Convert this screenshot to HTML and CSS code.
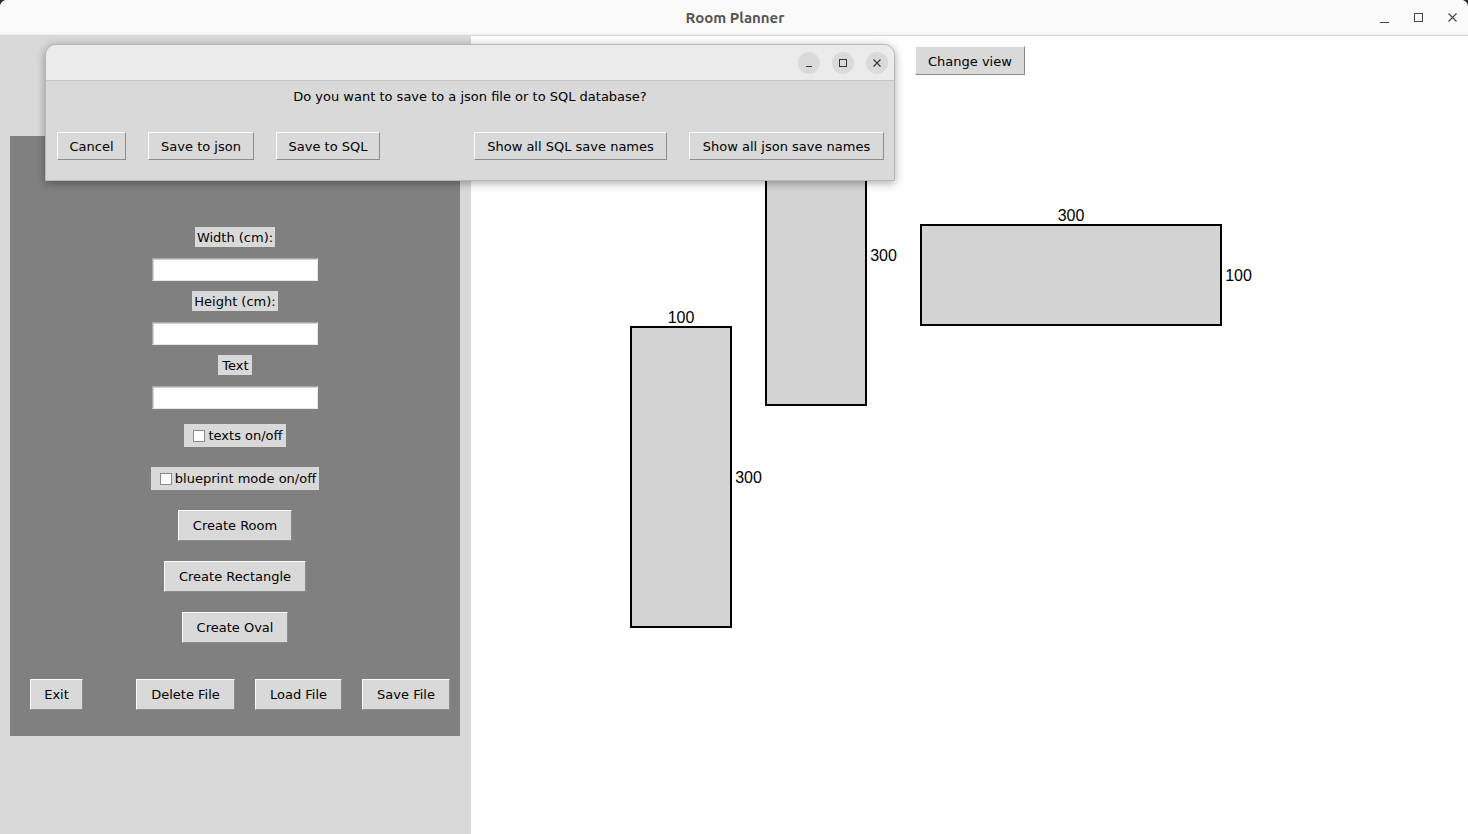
FILE: index.html
```html
<!DOCTYPE html>
<html lang="en">
<head>
<meta charset="utf-8">
<title>Room Planner</title>
<link rel="stylesheet" href="styles.css">
</head>
<body>
<div class="app">
  <header class="titlebar">
    <div class="title">Room Planner</div>
    <div class="wm-controls">
      <span class="wm-btn"><svg width="12" height="12" viewBox="0 0 12 12"><path d="M1 10.5h9" stroke="#444" stroke-width="1"/></svg></span>
      <span class="wm-btn"><svg width="12" height="12" viewBox="0 0 12 12"><rect x="1.5" y="1.5" width="8" height="8" fill="none" stroke="#444" stroke-width="1"/></svg></span>
      <span class="wm-btn"><svg width="12" height="12" viewBox="0 0 12 12"><path d="M1.5 1.5l8 8M9.5 1.5l-8 8" stroke="#444" stroke-width="1.1"/></svg></span>
    </div>
  </header>
  <main class="main">
    <aside class="side">
      <div class="panel">
        <span class="lbl lbl-first">Width (cm):</span>
        <input class="entry" type="text">
        <span class="lbl">Height (cm):</span>
        <input class="entry" type="text">
        <span class="lbl lbl-text">Text</span>
        <input class="entry" type="text">
        <label class="check check-1"><span class="box"></span>texts on/off</label>
        <label class="check check-2"><span class="box"></span>blueprint mode on/off</label>
        <button class="btn btn-big">Create Room</button>
        <button class="btn btn-big">Create Rectangle</button>
        <button class="btn btn-big">Create Oval</button>
        <div class="bottom-row">
          <button class="btn btn-big w-exit">Exit</button>
          <button class="btn btn-big w-delete">Delete File</button>
          <button class="btn btn-big w-load">Load File</button>
          <button class="btn btn-big w-save">Save File</button>
        </div>
      </div>
    </aside>
    <section class="canvas">
      <button class="btn btn-view">Change view</button>
      <div class="shape s1"></div>
      <div class="shape s2"></div>
      <div class="shape s3"></div>
      <span class="dim d1t">100</span>
      <span class="dim d1r">300</span>
      <span class="dim d2t">100</span>
      <span class="dim d2r">300</span>
      <span class="dim d3t">300</span>
      <span class="dim d3r">100</span>
    </section>
  </main>

  <div class="dialog">
    <div class="dlg-head">
      <span class="dlg-ctl"><svg width="10" height="10" viewBox="0 0 10 10"><path d="M2 8.5h6" stroke="#333" stroke-width="1"/></svg></span>
      <span class="dlg-ctl"><svg width="10" height="10" viewBox="0 0 10 10"><rect x="1.5" y="1.5" width="7" height="7" fill="none" stroke="#333" stroke-width="1"/></svg></span>
      <span class="dlg-ctl"><svg width="10" height="10" viewBox="0 0 10 10"><path d="M1.5 1.5l7 7M8.5 1.5l-7 7" stroke="#333" stroke-width="1.1"/></svg></span>
    </div>
    <div class="dlg-body">
      <p class="dlg-msg">Do you want to save to a json file or to SQL database?</p>
      <div class="dlg-buttons">
        <button class="btn btn-dlg w-cancel">Cancel</button>
        <button class="btn btn-dlg gap-s w-sjson">Save to json</button>
        <button class="btn btn-dlg gap-s w-ssql">Save to SQL</button>
        <button class="btn btn-dlg gap-l w-nsql">Show all SQL save names</button>
        <button class="btn btn-dlg gap-s w-njson">Show all json save names</button>
      </div>
    </div>
  </div>
</div>
</body>
</html>
```
FILE: styles.css
```css
* { box-sizing: border-box; }
html, body {
  margin: 0;
  padding: 0;
  width: 1468px;
  height: 834px;
  overflow: hidden;
  background: #2a2a2a;
}
.app {
  position: relative;
  width: 1468px;
  height: 834px;
  display: flex;
  flex-direction: column;
  border-radius: 7px 7px 0 0;
  overflow: hidden;
  background: #fafafa;
  font-family: "DejaVu Sans", "Liberation Sans", sans-serif;
  font-size: 13px;
  color: #000;
}
.titlebar {
  height: 36px;
  flex: none;
  position: relative;
  display: flex;
  align-items: center;
  justify-content: center;
  background: #fafafa;
  border-bottom: 1px solid #d6d6d6;
  box-shadow: inset 0 -3px 3px -2px rgba(0,0,0,0.06);
}
.title {
  font-family: "Ubuntu", "Noto Sans", "Open Sans", sans-serif;
  font-weight: 700;
  font-size: 15px;
  color: #555;
  margin-left: 2px;
}
.wm-controls {
  position: absolute;
  right: -2px;
  top: 0;
  height: 35px;
  display: flex;
  align-items: center;
}
.wm-btn {
  width: 34px;
  height: 34px;
  display: flex;
  align-items: center;
  justify-content: center;
}
.main {
  flex: 1;
  display: flex;
}
.side {
  width: 471px;
  flex: none;
  background: #d9d9d9;
  padding: 100px 11px 0 10px;
}
.panel {
  width: 450px;
  height: 600px;
  background: #808080;
  display: flex;
  flex-direction: column;
  align-items: center;
}
.lbl {
  background: #d9d9d9;
  height: 20px;
  line-height: 21px;
  padding: 0 2px;
  margin-top: 10px;
}
.lbl-first { margin-top: 91px; }
.lbl-text { padding: 0 3px 0 4px; }
.entry {
  width: 166px;
  height: 23px;
  margin-top: 11px;
  background: #fff;
  border: 1px solid;
  border-color: #a8a8a8 #e8e8e8 #e8e8e8 #a8a8a8;
  box-shadow: inset 1px 1px 0 #d0d0d0;
  font: inherit;
  padding: 0 3px;
}
.check {
  display: flex;
  align-items: center;
  background: #d9d9d9;
  height: 23px;
  padding: 0 3px 0 9px;
}
.check-1 { margin-top: 15px; }
.check-2 { margin-top: 20px; }
.box {
  width: 12px;
  height: 12px;
  background: #fff;
  border: 1px solid #8a8a8a;
  margin-right: 3px;
}
.btn {
  font: inherit;
  color: #000;
  background: #d9d9d9;
  border: 1px solid;
  border-color: #fafafa #8c8c8c #8c8c8c #fafafa;
  padding: 0 13px;
  margin: 0;
  white-space: nowrap;
  cursor: default;
}
.btn-big {
  height: 31px;
  margin-top: 20px;
  padding: 0 14px;
}
.bottom-row {
  display: flex;
  align-self: stretch;
  padding: 0 10px 0 20px;
  margin-top: 16px;
  gap: 20px;
}
.bottom-row .btn { margin-top: 20px; padding: 0; }
.w-exit { width: 53px; }
.w-delete { width: 99px; margin-left: 33px; }
.w-load { width: 87px; }
.w-save { width: 88px; }
.canvas {
  flex: 1;
  position: relative;
  background: #fff;
}
.btn-view {
  position: absolute;
  left: 444px;
  top: 10px;
  height: 29px;
  padding: 1px 12px 0;
}
.shape {
  position: absolute;
  background: #d3d3d3;
  border: 2px solid #000;
}
.s1 { left: 159px; top: 290px; width: 102px; height: 302px; }
.s2 { left: 294px; top: 68px; width: 102px; height: 302px; }
.s3 { left: 449px; top: 188px; width: 302px; height: 102px; }
.dim {
  position: absolute;
  font-family: "Liberation Sans", Arial, sans-serif;
  font-size: 16px;
  line-height: 18px;
  transform: translate(-50%, -50%);
  color: #000;
}
.d1t { left: 210px; top: 282px; }
.d1r { left: 277.5px; top: 442px; }
.d2t { left: 345px; top: 60px; }
.d2r { left: 412.5px; top: 220px; }
.d3t { left: 600px; top: 180px; }
.d3r { left: 767.5px; top: 240px; }

.dialog {
  position: absolute;
  left: 45px;
  top: 44px;
  width: 850px;
  height: 137px;
  border-radius: 11px 11px 0 0;
  background: #d9d9d9;
  border: 1px solid #b8b8b8;
  box-shadow: 0 2px 10px rgba(0,0,0,0.35);
  overflow: hidden;
  display: flex;
  flex-direction: column;
}
.dlg-head {
  height: 36px;
  flex: none;
  background: #ebebeb;
  border-bottom: 1px solid #c4c4c4;
  display: flex;
  justify-content: flex-end;
  align-items: center;
  gap: 12px;
  padding-right: 6px;
}
.dlg-ctl {
  width: 22px;
  height: 22px;
  border-radius: 50%;
  background: #dadada;
  display: flex;
  align-items: center;
  justify-content: center;
}
.dlg-body {
  flex: 1;
  display: flex;
  flex-direction: column;
}
.dlg-msg {
  margin: 7px 0 0;
  text-align: center;
  line-height: 18px;
}
.dlg-buttons {
  display: flex;
  margin-top: 26px;
  padding-left: 11px;
}
.btn-dlg {
  height: 28px;
  padding: 0;
}
.w-cancel { width: 69px; }
.w-sjson { width: 106px; }
.w-ssql { width: 104px; }
.w-nsql { width: 193px; }
.w-njson { width: 195px; }
.gap-s { margin-left: 22px; }
.gap-l { margin-left: 94px; }
```
